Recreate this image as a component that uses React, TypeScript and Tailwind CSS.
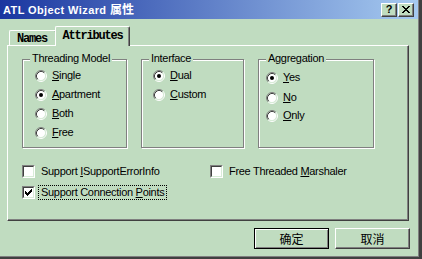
import React from 'react';

function TitleBtn({ children }: { children: React.ReactNode }) {
  return (
    <div className="w-[16px] h-[14px] bg-[#c0dcc0] border border-t-white border-l-white border-r-[#404040] border-b-[#404040] shadow-[inset_-1px_-1px_0_#808080] flex items-center justify-center">
      {children}
    </div>
  );
}

function CloseGlyph() {
  const px: [number, number, number][] = [
    [0, 0, 2], [6, 0, 2],
    [1, 1, 2], [5, 1, 2],
    [2, 2, 4],
    [3, 3, 2],
    [2, 4, 4],
    [1, 5, 2], [5, 5, 2],
    [0, 6, 2], [6, 6, 2],
  ];
  return (
    <svg width="8" height="7" viewBox="0 0 8 7" shapeRendering="crispEdges">
      {px.map(([x, y, w], i) => (
        <rect key={i} x={x} y={y} width={w} height={1} fill="#000" />
      ))}
    </svg>
  );
}

function Radio({ checked }: { checked?: boolean }) {
  return (
    <svg width="12" height="12" viewBox="0 0 12 12" className="shrink-0">
      <circle cx="6" cy="6" r="4.5" fill="#fff" />
      <path d="M2.11 9.89 A5.5 5.5 0 0 1 9.89 2.11" fill="none" stroke="#808080" />
      <path d="M9.89 2.11 A5.5 5.5 0 0 1 2.11 9.89" fill="none" stroke="#ffffff" />
      <path d="M2.82 9.18 A4.5 4.5 0 0 1 9.18 2.82" fill="none" stroke="#404040" />
      <path d="M9.18 2.82 A4.5 4.5 0 0 1 2.82 9.18" fill="none" stroke="#d8ecd8" />
      {checked && <circle cx="6" cy="6" r="2" fill="#000" />}
    </svg>
  );
}

function Check({ checked }: { checked?: boolean }) {
  const px: [number, number, number][] = [
    [7, 1, 1], [6, 2, 2], [1, 3, 1], [5, 3, 3], [1, 4, 2], [4, 4, 3], [1, 5, 5], [2, 6, 3], [3, 7, 1],
  ];
  return (
    <div className="w-[13px] h-[13px] shrink-0 border border-t-[#808080] border-l-[#808080] border-r-white border-b-white">
      <div className="w-full h-full bg-white border border-t-[#404040] border-l-[#404040] border-r-[#d8ecd8] border-b-[#d8ecd8]">
        {checked && (
          <svg width="9" height="9" viewBox="0 0 9 9" shapeRendering="crispEdges" className="block">
            {px.map(([x, y, w], i) => (
              <rect key={i} x={x} y={y} width={w} height={1} fill="#000" />
            ))}
          </svg>
        )}
      </div>
    </div>
  );
}

function Acc({ pre, acc, post }: { pre?: string; acc: string; post: string }) {
  return (
    <>
      {pre}
      <u className="underline decoration-1 underline-offset-[1px]">{acc}</u>
      {post}
    </>
  );
}

function RadioRow({ label, checked, className }: { label: string; checked?: boolean; className?: string }) {
  return (
    <div className={`h-[19px] flex items-center gap-[5px] ${className ?? ''}`}>
      <Radio checked={checked} />
      <span className="leading-[13px]">
        <Acc acc={label[0]} post={label.slice(1)} />
      </span>
    </div>
  );
}

function Group({ title, className, children }: { title: string; className: string; children: React.ReactNode }) {
  return (
    <div className={`relative h-[89px] border border-[#808080] shadow-[1px_1px_0_#fff,inset_1px_1px_0_#fff] flex flex-col ${className}`}>
      <span className="absolute left-[7px] -top-[8px] px-[2px] bg-[#c0dcc0] leading-[13px] whitespace-nowrap">{title}</span>
      {children}
    </div>
  );
}

export default function App() {
  return (
    <div className="w-[422px] h-[259px] bg-[#404040] overflow-hidden">
      <div className="w-[419px] h-[257px] border-r border-b border-[#808080] bg-[#c0dcc0] flex flex-col font-['Liberation_Sans',Arial,'Noto_Sans_CJK_SC',sans-serif] text-[11px] tracking-[-0.3px] text-black">
        {/* Title bar */}
        <div className="h-[19px] shrink-0 flex items-center justify-between pl-[3px] pr-[4px] bg-[linear-gradient(to_right,#1a36a0,#a6caf0)]">
          <div className="text-white font-bold text-[11px] leading-none tracking-[0.4px] whitespace-nowrap">
            ATL Object Wizard <span className="font-['Noto_Sans_CJK_SC',sans-serif] text-[12px] tracking-[0px]">属性</span>
          </div>
          <div className="flex gap-[1px]">
            <TitleBtn>
              <span className="font-bold text-[11px] leading-none tracking-[0px] font-['Liberation_Sans',Arial,sans-serif]">?</span>
            </TitleBtn>
            <TitleBtn>
              <CloseGlyph />
            </TitleBtn>
          </div>
        </div>

        {/* Body */}
        <div className="pt-[7px] pl-[7px]">
          {/* Tabs */}
          <div className="flex items-end pl-[2px]">
            <div className="w-[48px] h-[15px] border-t border-l border-r border-t-white border-l-white border-r-[#404040] shadow-[inset_-1px_0_0_#808080] rounded-tl-[2px] rounded-tr-[2px] flex items-center justify-center pr-[2px] pt-[1px] font-['Liberation_Mono',monospace] font-bold text-[12px] tracking-[-1.2px]">
              Names
            </div>
            <div className="relative z-10 -ml-[2px] -mb-px w-[75px] h-[20px] bg-[#c0dcc0] border-t border-l border-r border-t-white border-l-white border-r-[#404040] shadow-[inset_-1px_0_0_#808080] rounded-tl-[2px] rounded-tr-[2px] flex items-center justify-center pb-[1px] font-['Liberation_Mono',monospace] font-bold text-[12px] tracking-[-1.2px]">
              Attributes
            </div>
          </div>

          {/* Panel */}
          <div className="w-[402px] h-[176px] border border-t-white border-l-white border-r-[#404040] border-b-[#404040] shadow-[inset_-1px_-1px_0_#808080] pt-[13px] pl-[14px] flex flex-col">
            <div className="flex items-start gap-[14px]">
              <Group title="Threading Model" className="w-[105px] pt-[6px] pl-[12px]">
                <RadioRow label="Single" />
                <RadioRow label="Apartment" checked />
                <RadioRow label="Both" />
                <RadioRow label="Free" />
              </Group>
              <Group title="Interface" className="w-[103px] pt-[6px] pl-[11px]">
                <RadioRow label="Dual" checked />
                <RadioRow label="Custom" />
              </Group>
              <Group title="Aggregation" className="w-[116px] pt-[8px] pl-[7px]">
                <RadioRow label="Yes" checked />
                <RadioRow label="No" className="mt-[1px]" />
                <RadioRow label="Only" className="-mt-[1px]" />
              </Group>
            </div>

            <div className="mt-[16px] h-[15px] flex items-center">
              <div className="w-[188px] flex items-center">
                <Check />
                <span className="ml-[3px] px-[2px] border border-transparent leading-[13px] whitespace-nowrap">
                  <Acc pre="Support " acc="I" post="SupportErrorInfo" />
                </span>
              </div>
              <div className="flex items-center">
                <Check />
                <span className="ml-[3px] px-[2px] border border-transparent leading-[13px] whitespace-nowrap">
                  <Acc pre="Free Threaded " acc="M" post="arshaler" />
                </span>
              </div>
            </div>

            <div className="mt-[6px] h-[15px] flex items-center">
              <Check checked />
              <span className="ml-[3px] px-[2px] border border-dotted border-black leading-[13px] whitespace-nowrap">
                <Acc pre="Support Connection " acc="P" post="oints" />
              </span>
            </div>
          </div>

          {/* Buttons */}
          <div className="w-[403px] mt-[7px] flex justify-end gap-[6px]">
            <div className="w-[75px] h-[21px] border border-black shadow-[inset_1px_1px_0_#fff,inset_-1px_-1px_0_#808080] flex items-center justify-center font-['Noto_Sans_CJK_SC',sans-serif] text-[12px] tracking-[0px] leading-none">
              确定
            </div>
            <div className="w-[75px] h-[21px] border border-t-white border-l-white border-r-[#404040] border-b-[#404040] shadow-[inset_-1px_-1px_0_#808080] flex items-center justify-center font-['Noto_Sans_CJK_SC',sans-serif] text-[12px] tracking-[0px] leading-none">
              取消
            </div>
          </div>
        </div>
      </div>
    </div>
  );
}
